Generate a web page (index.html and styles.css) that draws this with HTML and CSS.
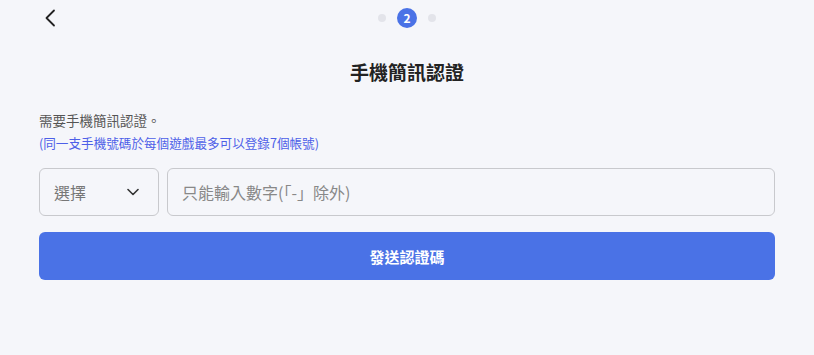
FILE: index.html
```html
<!DOCTYPE html>
<html lang="zh-Hant">
<head>
<meta charset="utf-8">
<link rel="stylesheet" href="styles.css">
</head>
<body>
<div class="page">
  <header class="topbar">
    <div class="back">
      <svg width="12" height="18" viewBox="0 0 12 18"><path d="M10 1.5 L2.5 9 L10 16.5" fill="none" stroke="#222" stroke-width="1.8" stroke-linecap="round" stroke-linejoin="round"/></svg>
    </div>
    <div class="steps">
      <span class="dot"></span>
      <span class="step-active">2</span>
      <span class="dot"></span>
    </div>
    <div></div>
  </header>
  <main class="content">
    <h1 class="title">手機簡訊認證</h1>
    <p class="desc">需要手機簡訊認證。</p>
    <p class="note">(同一支手機號碼於每個遊戲最多可以登錄7個帳號)</p>
    <div class="row">
      <div class="select">
        <span>選擇</span>
        <svg width="12" height="8" viewBox="0 0 12 8"><path d="M1 1.5 L6 6.5 L11 1.5" fill="none" stroke="#333" stroke-width="1.6" stroke-linecap="round" stroke-linejoin="round"/></svg>
      </div>
      <div class="input">只能輸入數字(「-」除外)</div>
    </div>
    <button class="submit">發送認證碼</button>
  </main>
</div>
</body>
</html>
```

FILE: styles.css
```css
html, body {
  margin: 0;
  padding: 0;
  background: #f5f6fa;
  font-family: "Noto Sans CJK TC", "Noto Sans", sans-serif;
}
.page {
  width: 814px;
}
.topbar {
  height: 36px;
  display: grid;
  grid-template-columns: 1fr auto 1fr;
  align-items: center;
}
.back {
  padding-left: 44px;
  display: flex;
  align-items: center;
  height: 36px;
}
.steps {
  display: flex;
  align-items: center;
  gap: 11px;
}
.dot {
  width: 8px;
  height: 8px;
  border-radius: 50%;
  background: #e3e4ea;
}
.step-active {
  width: 20px;
  height: 20px;
  border-radius: 50%;
  background: #4a72e6;
  color: #fff;
  font-size: 12px;
  font-weight: 700;
  display: flex;
  align-items: center;
  justify-content: center;
  line-height: 1;
}
.content {
  padding: 0 39px;
}
.title {
  margin: 22px 0 0;
  text-align: center;
  font-size: 19px;
  line-height: 28px;
  font-weight: 700;
  color: #222;
}
.desc {
  margin: 23px 0 0;
  font-size: 13.5px;
  line-height: 22px;
  color: #555;
}
.note {
  margin: 0;
  font-size: 12.6px;
  line-height: 24px;
  color: #4d5fe8;
}
.row {
  margin-top: 13px;
  display: flex;
  gap: 8px;
}
.select {
  box-sizing: border-box;
  width: 120px;
  height: 48px;
  border: 1px solid #c8c9cd;
  border-radius: 6px;
  display: flex;
  align-items: center;
  justify-content: space-between;
  padding: 0 19px 0 14px;
  font-size: 16px;
  color: #777;
}
.input {
  box-sizing: border-box;
  flex: 1;
  height: 48px;
  border: 1px solid #c8c9cd;
  border-radius: 6px;
  display: flex;
  align-items: center;
  padding: 0 14px;
  font-size: 16px;
  color: #888;
}
.submit {
  margin-top: 16px;
  width: 100%;
  height: 48px;
  border: none;
  border-radius: 6px;
  background: #4a72e6;
  color: #fff;
  font-family: inherit;
  font-size: 15px;
  font-weight: 700;
  display: block;
}
```
